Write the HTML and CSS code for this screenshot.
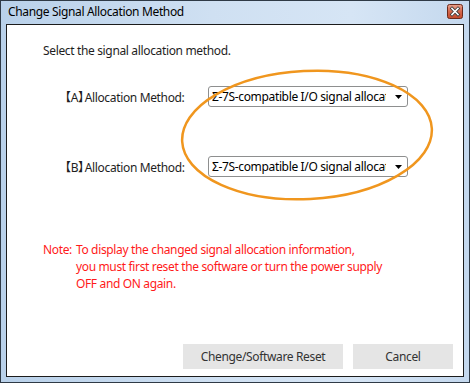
FILE: index.html
```html
<!DOCTYPE html>
<html lang="en">
<head>
    <meta charset="UTF-8">
    <title>Change Signal Allocation Method</title>
    <link rel="stylesheet" href="styles.css">
</head>
<body>

    <div class="window">
        <div class="titlebar">
            <span class="title">Change Signal Allocation Method</span>
            <span class="close-btn">
                <svg width="16" height="15" viewBox="0 0 16 15">
                    <defs>
                        <linearGradient id="redGrad" x1="0" y1="0" x2="0" y2="1">
                            <stop offset="0" stop-color="#e8a38f"/>
                            <stop offset="0.5" stop-color="#d4664b"/>
                            <stop offset="1" stop-color="#c44a2c"/>
                        </linearGradient>
                    </defs>
                    <rect x="0.5" y="0.5" width="15" height="14" rx="2" fill="url(#redGrad)" stroke="#6b2a1c"/>
                    <path d="M5 4.5 L11 10.5 M11 4.5 L5 10.5" stroke="#3a3a3a" stroke-width="3.2" stroke-linecap="square"/>
                    <path d="M5 4.5 L11 10.5 M11 4.5 L5 10.5" stroke="#ffffff" stroke-width="1.6" stroke-linecap="square"/>
                </svg>
            </span>
        </div>

        <div class="client">
            <p class="prompt">Select the signal allocation method.</p>

            <div class="rows">
                <div class="row">
                    <span class="row-label"><span class="br-open">【</span>A<span class="br-close">】</span>Allocation Method:</span>
                    <div class="combo">
                        <span class="combo-text">Σ-7S-compatible I/O signal allocation</span>
                        <svg class="combo-arrow" width="7" height="4" viewBox="0 0 7 4"><path d="M0 0 H7 L3.5 4 Z" fill="#000"/></svg>
                    </div>
                </div>
                <div class="row">
                    <span class="row-label"><span class="br-open">【</span>B<span class="br-close">】</span>Allocation Method:</span>
                    <div class="combo">
                        <span class="combo-text">Σ-7S-compatible I/O signal allocation</span>
                        <svg class="combo-arrow" width="7" height="4" viewBox="0 0 7 4"><path d="M0 0 H7 L3.5 4 Z" fill="#000"/></svg>
                    </div>
                </div>
            </div>

            <div class="note">
                <span class="note-head">Note:</span>
                <span class="note-body">To display the changed signal allocation information,<br>you must first reset the software or turn the power supply<br>OFF and ON again.</span>
            </div>

            <div class="buttons">
                <button class="btn btn-reset">Chenge/Software Reset</button>
                <button class="btn btn-cancel">Cancel</button>
            </div>

            <!-- marqueur orange autour des listes -->
            <svg class="highlight" width="260" height="136" viewBox="0 0 260 136">
                <ellipse cx="128" cy="66" rx="125" ry="64" fill="none" stroke="#f0961e" stroke-width="2.5" transform="rotate(-3 128 66)"/>
            </svg>
        </div>
    </div>

</body>
</html>
```

FILE: styles.css
```css
/* fenêtre de dialogue */
body {
    margin: 0;
    padding: 0;
    font-family: "Noto Sans", "Open Sans", "Noto Sans CJK JP", sans-serif;
    font-size: 12px;
    letter-spacing: -0.35px;
    background-color: #ffffff;
}

.window {
    width: 470px;
    height: 383px;
    box-sizing: border-box;
    border: 1px solid #2f3a46;
    background: linear-gradient(to right, #b9d1ea 0%, #cfe0f2 45%, #d6e5f5 75%, #c4d8ee 100%);
    padding: 0 5px 5px 5px;
    display: flex;
    flex-direction: column;
}

.titlebar {
    height: 23px;
    display: flex;
    align-items: center;
    justify-content: space-between;
}

.title {
    padding-left: 2px;
    font-size: 12px;
    color: #000000;
    margin-top: -2px;
}

.close-btn {
    display: flex;
    margin-right: 1px;
    margin-top: -3px;
}

.client {
    position: relative;
    flex: 1;
    background-color: #ffffff;
    border: 1px solid #1c1c1c;
    display: flex;
    flex-direction: column;
}

.prompt {
    margin: 18px 0 0 36px;
    line-height: 16px;
    color: #1e1e1e;
}

.rows {
    margin-top: 27px;
    display: flex;
    flex-direction: column;
    gap: 49px;
}

.row {
    display: flex;
    align-items: center;
}

.row-label {
    width: 149px;
    margin-left: 52px;
    color: #1e1e1e;
    white-space: nowrap;
}

.br-close {
    margin-right: -5px;
}

.combo {
    width: 200px;
    height: 21px;
    box-sizing: border-box;
    border: 1px solid #8e8f8f;
    border-radius: 3px;
    background-color: #ffffff;
    display: flex;
    align-items: center;
    padding: 0 5px 0 3px;
    gap: 9px;
}

.combo-text {
    flex: 1;
    overflow: hidden;
    white-space: nowrap;
    color: #000000;
}

.combo-arrow {
    flex-shrink: 0;
}

.note {
    margin: 64px 0 0 36px;
    display: flex;
    gap: 4px;
    color: #ff1a1a;
    line-height: 17px;
}

.buttons {
    margin-top: auto;
    margin-bottom: 7px;
    display: flex;
    justify-content: flex-end;
    gap: 10px;
    padding-right: 10px;
}

.btn {
    height: 25px;
    border: none;
    background-color: #e5e5e5;
    font-family: inherit;
    font-size: 12px;
    letter-spacing: inherit;
    color: #333333;
    padding: 0;
}

.btn-reset {
    width: 160px;
}

.btn-cancel {
    width: 100px;
}

.highlight {
    position: absolute;
    left: 172px;
    top: 44px;
}
```
